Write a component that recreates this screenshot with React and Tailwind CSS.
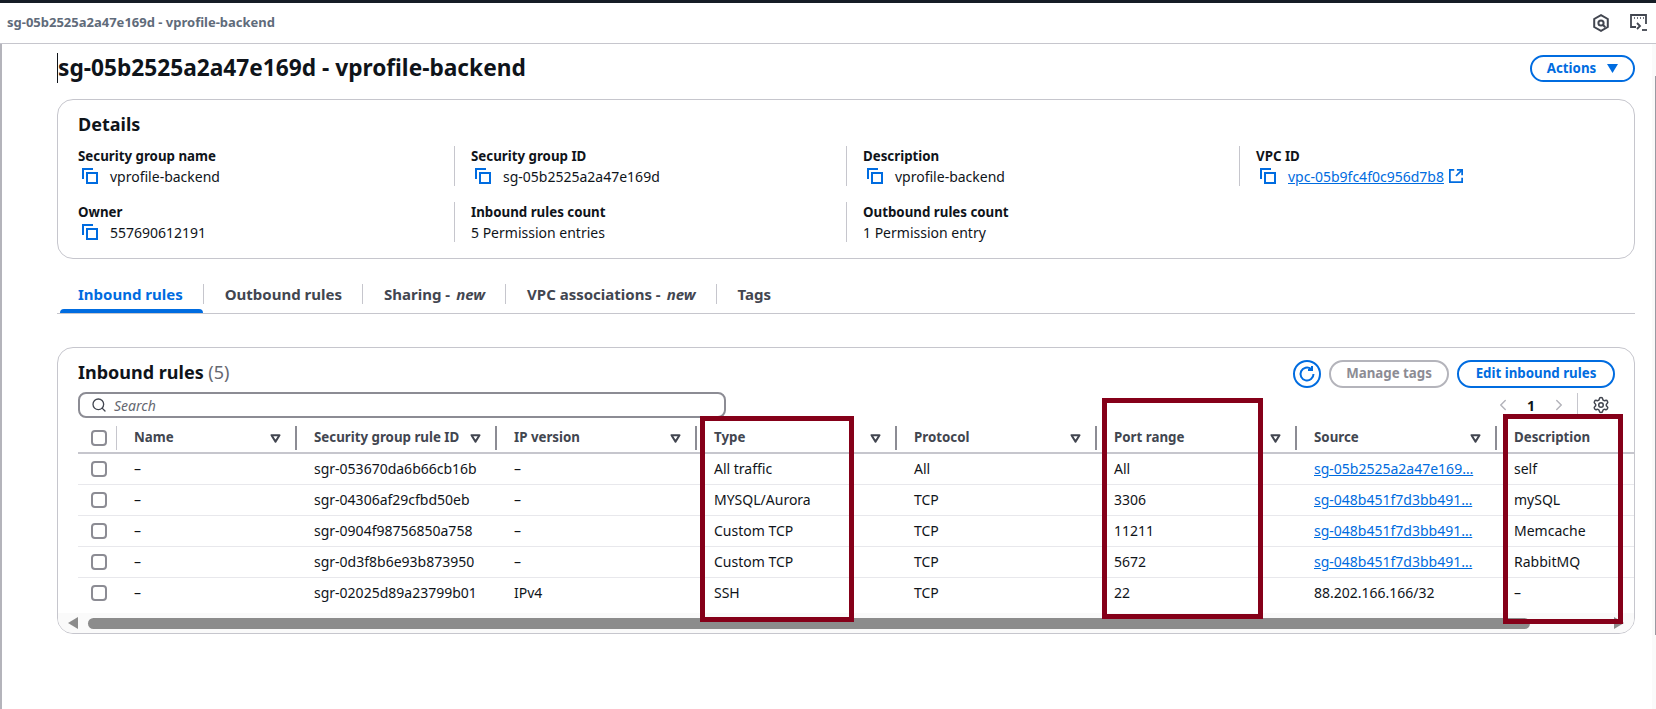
import { Search, Settings, ChevronLeft, ChevronRight } from 'lucide-react';

const columns = [
  { label: 'Name', width: 'w-[180px]' },
  { label: 'Security group rule ID', width: 'w-[200px]' },
  { label: 'IP version', width: 'w-[200px]' },
  { label: 'Type', width: 'w-[200px]' },
  { label: 'Protocol', width: 'w-[200px]' },
  { label: 'Port range', width: 'w-[200px]' },
  { label: 'Source', width: 'w-[200px]' },
  { label: 'Description', width: 'w-[200px]' },
];

const rows = [
  ['–', 'sgr-053670da6b66cb16b', '–', 'All traffic', 'All', 'All', 'sg-05b2525a2a47e169…', 'self'],
  ['–', 'sgr-04306af29cfbd50eb', '–', 'MYSQL/Aurora', 'TCP', '3306', 'sg-048b451f7d3bb491…', 'mySQL'],
  ['–', 'sgr-0904f98756850a758', '–', 'Custom TCP', 'TCP', '11211', 'sg-048b451f7d3bb491…', 'Memcache'],
  ['–', 'sgr-0d3f8b6e93b873950', '–', 'Custom TCP', 'TCP', '5672', 'sg-048b451f7d3bb491…', 'RabbitMQ'],
  ['–', 'sgr-02025d89a23799b01', 'IPv4', 'SSH', 'TCP', '22', '88.202.166.166/32', '–'],
];

const CopyIcon = () => (
  <svg width="16" height="16" viewBox="0 0 16 16" fill="none" stroke="#006ce0" strokeWidth="2" className="shrink-0">
    <rect x="5" y="5" width="10" height="10" />
    <path d="M1 11V1h10" />
  </svg>
);

const ExternalIcon = () => (
  <svg width="14" height="14" viewBox="0 0 16 16" fill="none" stroke="#006ce0" strokeWidth="2" className="ml-[5px] shrink-0">
    <path d="M6 1H1v14h14v-5" />
    <path d="M9 1h6v6" />
    <path d="M15 1 8 8" />
  </svg>
);

const FilterArrow = () => (
  <svg width="11" height="9" viewBox="0 0 11 9" fill="none" stroke="#424650" strokeWidth="2" strokeLinejoin="round" className="shrink-0">
    <path d="M1.5 1.2h8L5.5 7.6z" />
  </svg>
);

const Field = ({ label, value, copy, link, divider }) => (
  <div className={`h-10 pl-4 ${divider ? 'border-l border-[#c6c6cd]' : ''}`}>
    <div className="text-[13.3px] leading-5 font-bold text-[#0f141a]">{label}</div>
    <div className="flex items-center h-5 text-[14px] text-[#0f141a]">
      {copy && <span className="ml-1 mr-3"><CopyIcon /></span>}
      {link ? (
        <>
          <span className="text-[#006ce0] underline">{value}</span>
          <ExternalIcon />
        </>
      ) : (
        <span>{value}</span>
      )}
    </div>
  </div>
);

const Tab = ({ children, active, last }) => (
  <div className={`flex items-center h-5 ${last ? '' : 'pr-[20px] border-r border-[#c6c6cd]'} ml-[21px] text-[15px] font-bold ${active ? 'text-[#006ce0]' : 'text-[#424650]'}`}>
    {children}
  </div>
);

export default function App() {
  return (
    <div className="relative flex flex-col h-[709px] w-full overflow-hidden bg-white font-['Noto_Sans',sans-serif]">
      <div className="h-[3px] bg-[#161d26]" />
      <header className="flex items-center justify-between h-[41px] pl-[7px] pr-[8px] border-b border-[#c6c6cd]">
        <span className="text-[13px] font-bold text-[#5f6b7a]">sg-05b2525a2a47e169d - vprofile-backend</span>
        <div className="flex items-center gap-[21px]">
          <svg width="16" height="18" viewBox="0 0 16 18" fill="none" stroke="#424650" strokeWidth="2">
            <path d="M8 1.2 14.8 5v8L8 16.8 1.2 13V5z" />
            <circle cx="8" cy="9" r="2.6" />
            <path d="m9.5 10.5 2.8 2.8" />
          </svg>
          <svg width="18" height="18" viewBox="0 0 18 18" fill="none" stroke="#424650" strokeWidth="1.8">
            <path d="M6 13H1V1h15v9" />
            <path d="M4 4h1M7 4h1M10 4h1M13 4h1" strokeWidth="1.5" />
            <path d="m7 9 3 3-3 3" />
            <path d="M12 16h5" />
          </svg>
        </div>
      </header>

      <main className="flex-1 pl-[55px] pr-[21px] border-l-2 border-[#b4b4bb]">
        <div className="flex items-center justify-between h-[55px] pb-[7px]">
          <h1 className="text-[22.7px] leading-[30px] font-bold text-[#0f141a] border-l border-[#0f141a]">sg-05b2525a2a47e169d - vprofile-backend</h1>
          <button className="flex items-center gap-[11px] h-[27px] w-[105px] mt-px justify-center border-2 border-[#006ce0] rounded-full text-[13.3px] font-bold text-[#006ce0]">
            Actions
            <svg width="11" height="9" viewBox="0 0 11 9" fill="#006ce0"><path d="M0 0h11L5.5 9z" /></svg>
          </button>
        </div>

        <section className="h-[160px] border border-[#c6c6cd] rounded-2xl pt-[12px] px-[20px]">
          <h2 className="text-[18px] leading-[24px] font-bold text-[#0f141a]">Details</h2>
          <div className="grid grid-cols-[392px_392px_393px_1fr] gap-y-4 mt-[10px] -ml-4">
            <Field label="Security group name" value="vprofile-backend" copy />
            <Field label="Security group ID" value="sg-05b2525a2a47e169d" copy divider />
            <Field label="Description" value="vprofile-backend" copy divider />
            <Field label="VPC ID" value="vpc-05b9fc4f0c956d7b8" copy link divider />
            <Field label="Owner" value="557690612191" copy />
            <Field label="Inbound rules count" value="5 Permission entries" divider />
            <Field label="Outbound rules count" value="1 Permission entry" divider />
          </div>
        </section>

        <nav className="relative flex items-start h-[55px] pt-[25px] border-b border-[#c6c6cd]">
          <Tab active>Inbound rules</Tab>
          <Tab>Outbound rules</Tab>
          <Tab>Sharing - <em className="ml-[6px]">new</em></Tab>
          <Tab>VPC associations - <em className="ml-[6px]">new</em></Tab>
          <Tab last>Tags</Tab>
          <div className="absolute left-[3px] bottom-0 h-1 w-[143px] rounded-t bg-[#006ce0]" />
        </nav>

        <section className="relative h-[287px] mt-[33px] border border-[#c6c6cd] rounded-2xl overflow-hidden">
          <div className="flex items-start justify-between h-[45px] pl-[20px] pr-[19px] pt-[12px]">
            <h2 className="text-[18px] leading-[24px] font-bold text-[#0f141a]">
              Inbound rules <span className="font-normal text-[#656871]">(5)</span>
            </h2>
            <div className="flex items-center gap-2">
              <button className="flex items-center justify-center w-7 h-7 border-2 border-[#006ce0] rounded-full">
                <svg width="18" height="18" viewBox="0 0 18 18" fill="none" stroke="#006ce0" strokeWidth="2">
                  <path d="M15.5 9A6.5 6.5 0 1 1 13 3.9" />
                  <path d="M14 1v4h-4" />
                </svg>
              </button>
              <button className="flex items-center justify-center w-[120px] h-7 border-2 border-[#b4b4bb] rounded-full text-[13.3px] font-bold text-[#8c8c94]">Manage tags</button>
              <button className="flex items-center justify-center w-[158px] h-7 border-2 border-[#006ce0] rounded-full text-[13.3px] font-bold text-[#006ce0]">Edit inbound rules</button>
            </div>
          </div>

          <div className="flex items-start justify-between h-[26px] pl-[20px] pr-[24px]">
            <div className="flex items-center w-[648px] h-[26px] -mt-px border-2 border-[#8c8c94] rounded-lg pl-[11px] gap-[7px]">
              <Search size={16} strokeWidth={2} className="text-[#424650]" />
              <span className="text-[14px] italic text-[#656871]">Search</span>
            </div>
            <div className="flex items-center text-[#0f141a]">
              <ChevronLeft size={18} className="text-[#b4b4bb]" />
              <span className="w-[38px] text-center text-[14px] font-bold">1</span>
              <ChevronRight size={18} className="text-[#b4b4bb]" />
              <span className="ml-[9px] mr-[14px] h-6 border-l border-[#c6c6cd]" />
              <Settings size={18} strokeWidth={2} className="text-[#424650]" />
            </div>
          </div>

          <table className="table-fixed mt-[7px] w-[1611px] ml-[20px] text-[14px] text-[#0f141a] border-collapse">
            <thead>
              <tr className="h-[27px] border-b-2 border-[#c6c6cd]">
                <th className="w-[39px] p-0 pl-[13px] align-top">
                  <div className="flex items-center h-6 border-r border-[#c6c6cd] w-[26px]">
                    <span className="block w-4 h-4 border-2 border-[#8c8c94] rounded" />
                  </div>
                </th>
                {columns.map((col, i) => (
                  <th key={col.label} className={`${col.width} p-0 font-bold text-[13.3px] text-left align-top text-[#424650]`}>
                    <div className={`flex items-center justify-between h-6 pl-[17px] pr-[14px] ${i < 7 ? 'border-r-2 border-[#8c8c94]' : ''}`}>
                      <span>{col.label}</span>
                      {i < 7 && <FilterArrow />}
                    </div>
                  </th>
                ))}
              </tr>
            </thead>
            <tbody>
              {rows.map((row, r) => (
                <tr key={r} className={`h-[31px] ${r < 4 ? 'border-b border-[#e8e8ec]' : ''}`}>
                  <td className="p-0 pl-[13px]">
                    <span className="block w-4 h-4 border-2 border-[#8c8c94] rounded" />
                  </td>
                  {row.map((cell, c) => (
                    <td key={c} className="p-0 pl-[17px]">
                      {c === 6 && cell.startsWith('sg-') ? (
                        <span className="text-[#006ce0] underline">{cell}</span>
                      ) : (
                        cell
                      )}
                    </td>
                  ))}
                </tr>
              ))}
            </tbody>
          </table>

          <div className="absolute left-0 right-0 bottom-0 flex items-center h-5 bg-[#fafafa] pl-[10px] pr-[10px]">
            <svg width="10" height="12" viewBox="0 0 10 12" fill="#8c8c8c"><path d="M10 0v12L0 6z" /></svg>
            <div className="ml-[10px] w-[1442px] h-[11px] rounded-full bg-[#8c8c8c]" />
            <svg width="10" height="12" viewBox="0 0 10 12" fill="#8c8c8c" className="ml-auto"><path d="M0 0v12l10-6z" /></svg>
          </div>
        </section>
      </main>

      {/* red annotation boxes drawn over the screenshot */}
      <div className="absolute left-[700px] top-[416px] w-[154px] h-[206px] border-[5px] border-[#850019]" />
      <div className="absolute left-[1102px] top-[398px] w-[161px] h-[221px] border-[5px] border-[#850019]" />
      <div className="absolute left-[1503px] top-[414px] w-[120px] h-[210px] border-[5px] border-[#850019]" />

      {/* browser scrollbar edge on the right */}
      <div className="absolute right-0 top-[44px] bottom-0 w-1 bg-[#fafafa]">
        <div className="absolute right-0 top-[32px] h-[559px] w-px bg-[#9a9aa2]" />
      </div>
    </div>
  );
}
